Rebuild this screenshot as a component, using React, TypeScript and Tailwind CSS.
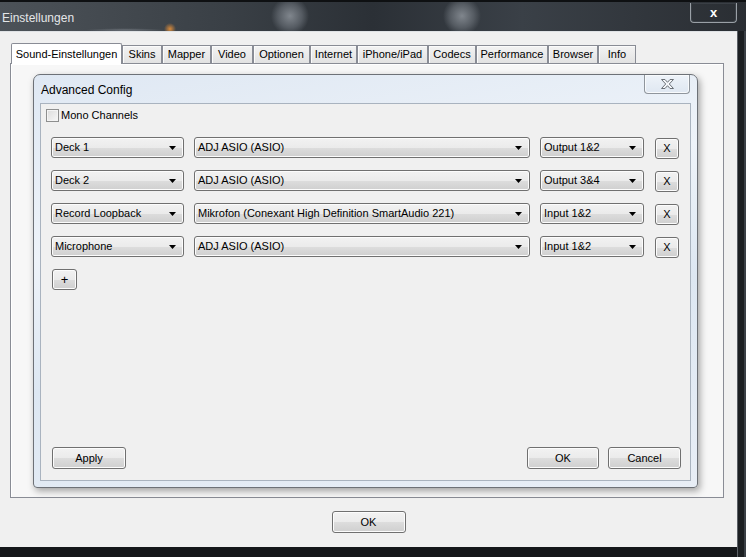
import React from 'react'

const tabs = [
  { label: 'Sound-Einstellungen', w: 'w-[111px]' },
  { label: 'Skins', w: 'w-[40px]' },
  { label: 'Mapper', w: 'w-[49px]' },
  { label: 'Video', w: 'w-[42px]' },
  { label: 'Optionen', w: 'w-[57px]' },
  { label: 'Internet', w: 'w-[47px]' },
  { label: 'iPhone/iPad', w: 'w-[71px]' },
  { label: 'Codecs', w: 'w-[48px]' },
  { label: 'Performance', w: 'w-[72px]' },
  { label: 'Browser', w: 'w-[50px]' },
  { label: 'Info', w: 'w-[38px]' },
]

const rows = [
  { kind: 'Deck 1', device: 'ADJ ASIO (ASIO)', channel: 'Output 1&2' },
  { kind: 'Deck 2', device: 'ADJ ASIO (ASIO)', channel: 'Output 3&4' },
  { kind: 'Record Loopback', device: 'Mikrofon (Conexant High Definition SmartAudio 221)', channel: 'Input 1&2' },
  { kind: 'Microphone', device: 'ADJ ASIO (ASIO)', channel: 'Input 1&2' },
]

const btn =
  'flex items-center justify-center border border-[#707070] rounded-[3px] bg-[linear-gradient(#f2f2f2_0%,#ebebeb_50%,#dddddd_51%,#cfcfcf_100%)] shadow-[inset_0_0_0_1px_#fcfcfc] text-black'

function Combo({ text, w }: { text: string; w: string }) {
  return (
    <div
      className={`${w} h-[21px] flex items-center justify-between pl-[3px] pr-[7px] border border-[#707070] rounded-[3px] bg-[linear-gradient(#f2f2f2_0%,#ebebeb_50%,#dddddd_51%,#cfcfcf_100%)] shadow-[inset_0_0_0_1px_#fcfcfc]`}
    >
      <span className="whitespace-nowrap">{text}</span>
      <svg width="7" height="4" viewBox="0 0 7 4">
        <path d="M0 0h7L3.5 4z" fill="#000" />
      </svg>
    </div>
  )
}

export default function App() {
  return (
    <div
      className="w-[746px] h-[557px] overflow-hidden bg-[#15171a] text-[11px] text-black flex flex-col"
      style={{ fontFamily: '"Liberation Sans", Arial, sans-serif' }}
    >
      {/* window title bar */}
      <div className="h-[31px] shrink-0 flex items-start justify-between border-t-[2px] border-[#0e1012] bg-[radial-gradient(circle_at_290px_14px,#80868d_0,#555b62_12px,transparent_19px),radial-gradient(circle_at_462px_14px,#80868d_0,#555b62_12px,transparent_19px),radial-gradient(circle_at_170px_27px,#d98a3a_0,transparent_6px),radial-gradient(ellipse_at_125px_28px,#6a7077_0,transparent_40px),linear-gradient(90deg,#4c5258_0%,#3a4046_30%,#2b3036_50%,#3a4047_70%,#2a2e33_100%)]">
        <span className="mt-[7px] ml-[2px] text-[12px] text-[#e4e6e8]">Einstellungen</span>
        <div className="mr-[9px] mt-[1px] w-[47px] h-[20px] flex items-center justify-center border border-[#9aa0a6] border-t-0 rounded-b-[4px] shadow-[inset_0_0_0_1px_#3a3f45]">
          <span className="text-white text-[13px] font-bold leading-none">x</span>
        </div>
      </div>

      <div className="flex flex-1 min-h-0">
        {/* window client */}
        <div className="w-[737px] h-[516px] shrink-0 bg-[#f0f0f0] border-t border-[#dfe2e5] flex flex-col">
          {/* tabs */}
          <div className="mt-[10px] ml-[11px] flex items-end h-[21px]">
            {tabs.map((t, i) =>
              i === 0 ? (
                <div
                  key={t.label}
                  className={`${t.w} h-[21px] relative z-10 -mb-px flex items-center justify-center bg-white border border-b-0 border-[#898c95] rounded-t-[2px]`}
                >
                  {t.label}
                </div>
              ) : (
                <div
                  key={t.label}
                  className={`${t.w} h-[18px] flex items-center justify-center bg-[linear-gradient(#f3f3f3,#e2e2e2)] border border-b-0 border-[#898c95] shadow-[inset_1px_1px_0_#fbfbfb]`}
                >
                  {t.label}
                </div>
              )
            )}
          </div>

          {/* tab panel */}
          <div className="ml-[10px] w-[714px] h-[435px] border border-[#898c95] bg-[#f7f7f7] shadow-[inset_1px_1px_0_#fff] pl-[22px] pt-[10px]">
            {/* Advanced Config dialog */}
            <div className="w-[665px] h-[414px] rounded-t-[7px] rounded-b-[4px] border border-[#6d7177] bg-[linear-gradient(170deg,#dfe8f3_0%,#eef3f9_35%,#dde7f2_60%,#e8eef6_100%)] shadow-[2px_3px_7px_rgba(0,0,0,0.35)] flex flex-col px-[6px] pb-[6px]">
              <div className="h-[28px] shrink-0 flex items-start justify-between">
                <span className="mt-[6px] ml-[1px] text-[12px]">Advanced Config</span>
                <div className="mr-[1px] w-[46px] h-[19px] flex items-center justify-center border border-[#8f959c] border-t-0 rounded-b-[4px] bg-[linear-gradient(#eef3f9,#dfe7f1)] shadow-[inset_0_0_0_1px_#f8fafc]">
                  <svg width="15" height="12" viewBox="0 0 15 12">
                    <path
                      d="M1.5 1.5h3.5l2.5 2.8l2.5-2.8h3.5l-4.2 4.5l4.2 4.5h-3.5l-2.5-2.8l-2.5 2.8h-3.5l4.2-4.5z"
                      fill="#f5f7fa"
                      stroke="#6b7077"
                      strokeWidth="1"
                      strokeLinejoin="round"
                    />
                  </svg>
                </div>
              </div>

              {/* client area */}
              <div className="flex-1 border border-[#a9b3bf] bg-[#f0f0f0] flex flex-col">
                <label className="mt-[3px] ml-[5px] h-[16px] flex items-center gap-[2px]">
                  <span className="w-[13px] h-[13px] border border-[#8e8f8f] bg-[linear-gradient(135deg,#dcdcdc,#f7f7f7)] shadow-[inset_0_0_0_1px_#f4f4f4]" />
                  <span>Mono Channels</span>
                </label>

                <div className="mt-[14px] ml-[10px] flex flex-col gap-[12px]">
                  {rows.map((r, i) => (
                    <div key={i} className="flex items-start h-[21px]">
                      <Combo text={r.kind} w="w-[133px]" />
                      <div className="w-[10px]" />
                      <Combo text={r.device} w="w-[336px]" />
                      <div className="w-[10px]" />
                      <Combo text={r.channel} w="w-[104px]" />
                      <div className="w-[11px]" />
                      <div className={`${btn} w-[24px] h-[21px] mt-[1px]`}>X</div>
                    </div>
                  ))}
                </div>

                <div className={`${btn} ml-[11px] mt-[12px] w-[25px] h-[21px] text-[13px]`}>+</div>

                <div className="flex-1" />

                <div className="flex items-center pl-[11px] pr-[9px] mb-[11px]">
                  <div className={`${btn} w-[74px] h-[22px]`}>Apply</div>
                  <div className="flex-1" />
                  <div className={`${btn} w-[72px] h-[22px]`}>OK</div>
                  <div className={`${btn} w-[73px] h-[22px] ml-[9px]`}>Cancel</div>
                </div>
              </div>
            </div>
          </div>

          <div className="flex justify-center mt-[13px]">
            <div className={`${btn} w-[74px] h-[22px]`}>OK</div>
          </div>
        </div>

        {/* right frame edge */}
        <div className="flex-1 border-l border-[#5b6066] bg-[#1c1f22] shadow-[inset_-2px_0_0_#3b4046]" />
      </div>
    </div>
  )
}
